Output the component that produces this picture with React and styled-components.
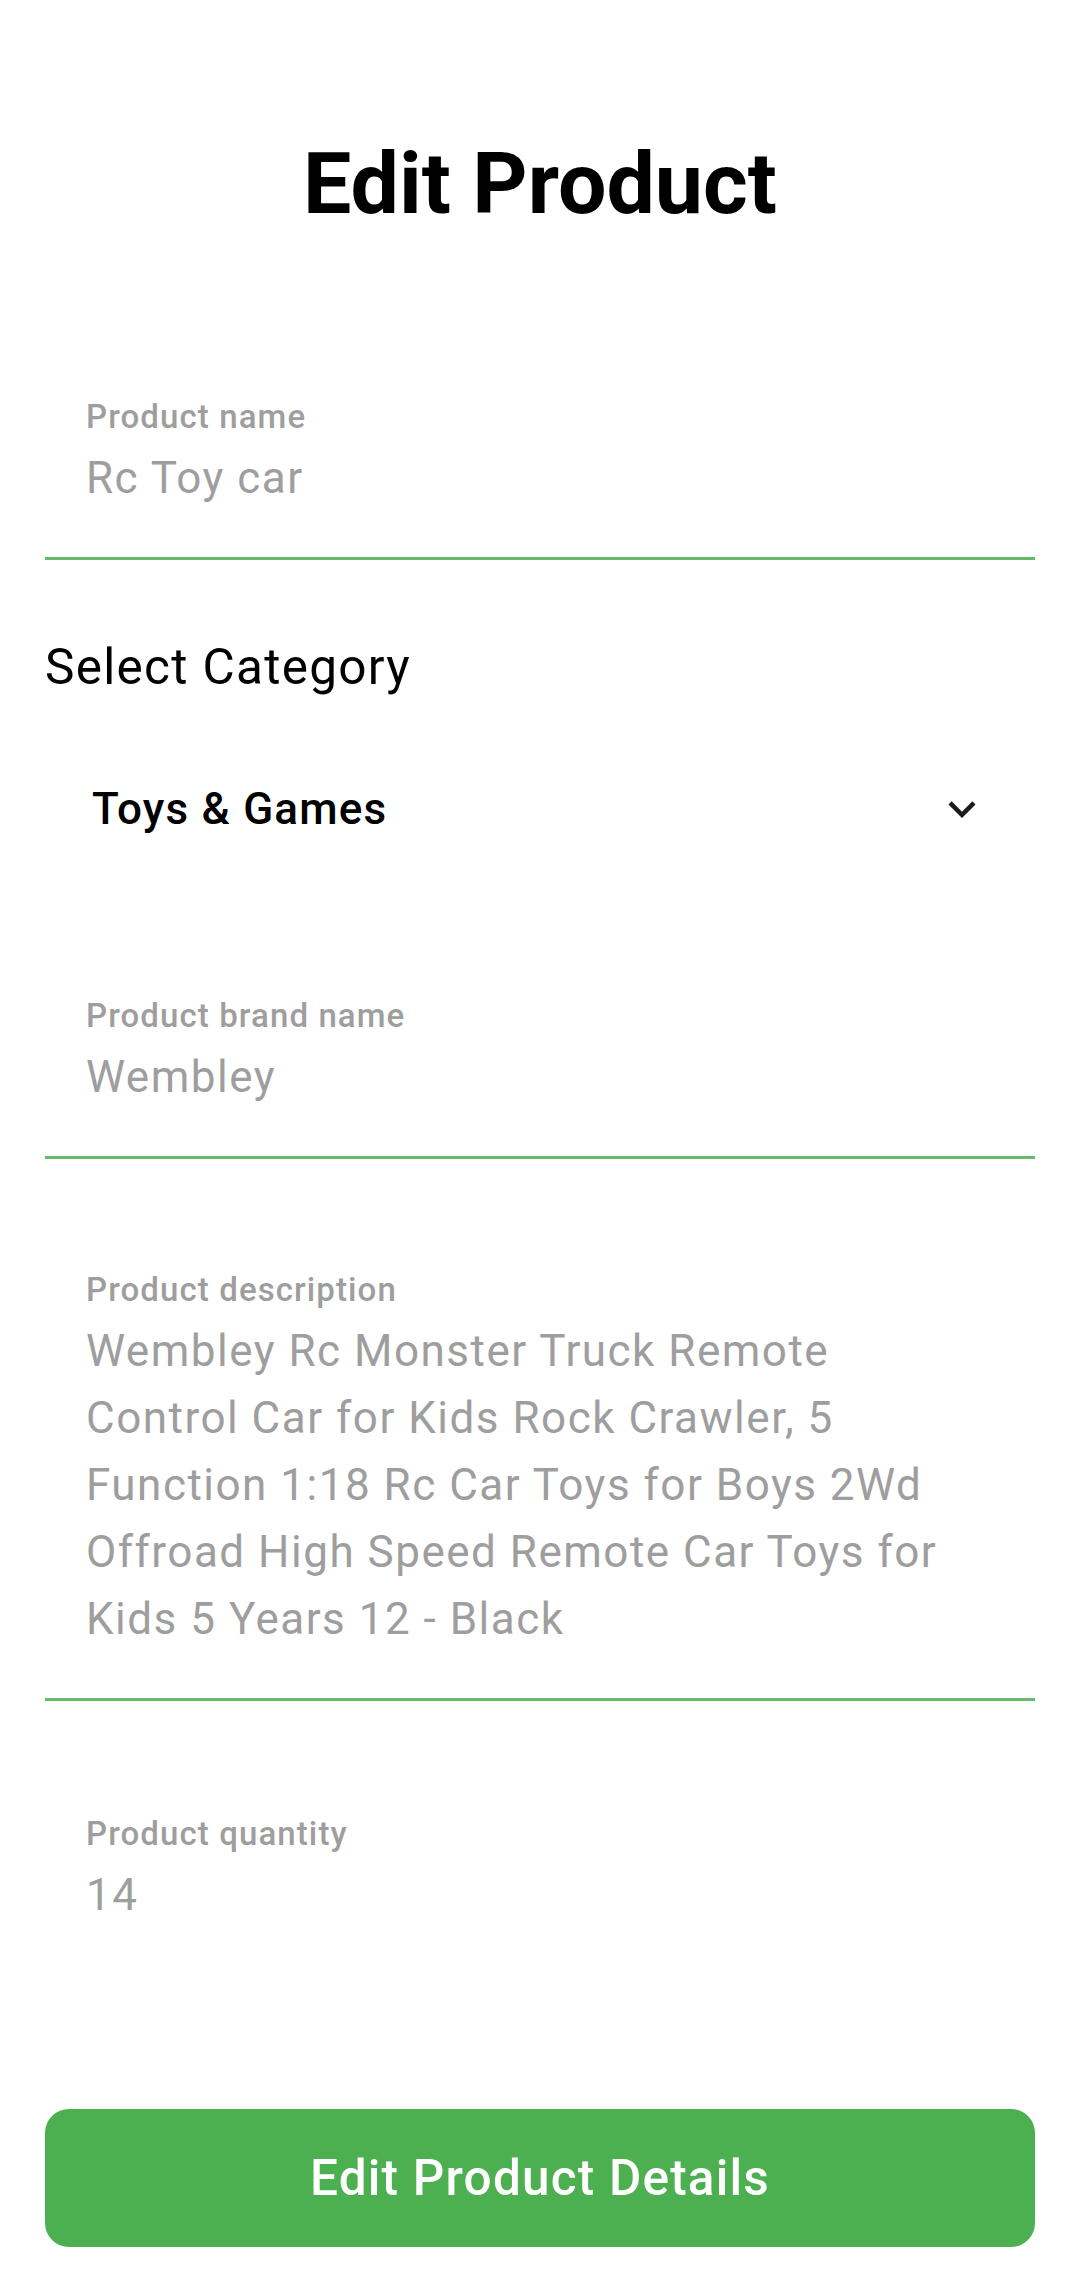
import React from 'react';
import styled, {createGlobalStyle} from 'styled-components';

const GlobalStyle = createGlobalStyle`
  * {
    box-sizing: border-box;
  }
  body {
    margin: 0;
    background: #ffffff;
    font-family: Roboto, "Noto Sans", "Liberation Sans", sans-serif;
  }
`;

const Page = styled.div`
  width: 1080px;
  min-height: 2278px;
  padding: 134px 45px 0 45px;
  display: flex;
  flex-direction: column;
`;

const Title = styled.h1`
  margin: 0;
  font-size: 86px;
  line-height: 100px;
  font-weight: 700;
  color: #000;
  text-align: center;
`;

const Field = styled.div`
  margin-top: ${props => props.$top}px;
  padding: 0 60px 45px 41px;
  border-bottom: 3px solid ${props => props.$line ? '#66bb6a' : 'transparent'};
  display: flex;
  flex-direction: column;
  gap: 7px;
`;

const Label = styled.span`
  font-size: 33px;
  line-height: 42px;
  font-weight: 500;
  letter-spacing: 1.1px;
  color: #9e9e9e;
`;

const Value = styled.div`
  font-size: 44px;
  line-height: 67px;
  letter-spacing: 1.5px;
  color: #9e9e9e;
`;

const SectionTitle = styled.h2`
  margin: 79px 0 0;
  font-size: 49.5px;
  line-height: 56px;
  font-weight: 400;
  letter-spacing: 1.3px;
  color: #000;
`;

const Dropdown = styled.div`
  margin-top: 40px;
  height: 147px;
  padding: 0 46px 0 47px;
  display: flex;
  align-items: center;
  justify-content: space-between;
`;

const DropdownText = styled.span`
  font-size: 44px;
  font-weight: 500;
  letter-spacing: 1.2px;
  color: #000;
`;

const Chevron = styled.svg`
  width: 54px;
  height: 54px;
  fill: #1c1b1f;
`;

const Button = styled.button`
  margin-top: 132px;
  height: 138px;
  width: 100%;
  border: none;
  border-radius: 24px;
  background: #4caf50;
  color: #fff;
  font-family: inherit;
  font-size: 49.5px;
  font-weight: 500;
  letter-spacing: 1.2px;
`;

const fields = [
  {label: 'Product name', value: 'Rc Toy car'},
  {label: 'Product brand name', value: 'Wembley'},
  {
    label: 'Product description',
    value: 'Wembley Rc Monster Truck Remote Control Car for Kids Rock Crawler, 5 Function 1:18 Rc Car Toys for Boys 2Wd Offroad High Speed Remote Car Toys for Kids 5 Years 12 - Black',
  },
  {label: 'Product quantity', value: '14'},
];

export default function App() {
  const [name, brand, description, quantity] = fields;
  return (
    <>
      <GlobalStyle />
      <Page>
        <Title>Edit Product</Title>
        <Field $top={162} $line>
          <Label>{name.label}</Label>
          <Value>{name.value}</Value>
        </Field>
        <SectionTitle>Select Category</SectionTitle>
        <Dropdown>
          <DropdownText>Toys &amp; Games</DropdownText>
          <Chevron viewBox="0 0 24 24">
            <path d="M7.41 8.59 12 13.17l4.59-4.58L18 10l-6 6-6-6z" />
          </Chevron>
        </Dropdown>
        <Field $top={113} $line>
          <Label>{brand.label}</Label>
          <Value>{brand.value}</Value>
        </Field>
        <Field $top={110} $line>
          <Label>{description.label}</Label>
          <Value>{description.value}</Value>
        </Field>
        <Field $top={112}>
          <Label>{quantity.label}</Label>
          <Value>{quantity.value}</Value>
        </Field>
        <Button>Edit Product Details</Button>
      </Page>
    </>
  );
}
